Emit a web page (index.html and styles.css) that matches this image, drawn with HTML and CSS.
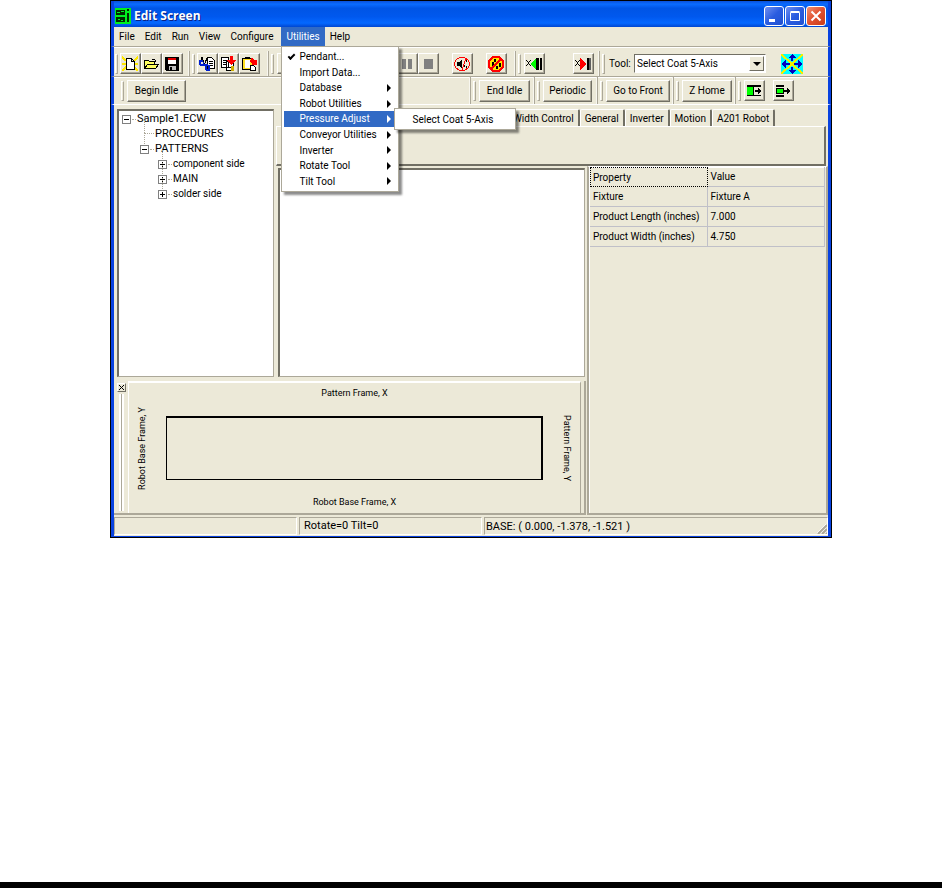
FILE: index.html
```html
<!DOCTYPE html>
<html lang="en">
<head>
    <meta charset="UTF-8">
    <meta name="viewport" content="width=device-width, initial-scale=1.0">
    <title>Edit Screen</title>
    <link rel="stylesheet" href="styles.css">
</head>
<body>
    <div class="window">
        <header class="titlebar">
            <svg class="appIcon" width="16" height="16" viewBox="0 0 16 16" shape-rendering="crispEdges">
                <path fill="#00f020" d="M0 0h16v16H0z"/>
                <path fill="#002800" d="M1 2h9v5H1zM1 9h9v5H1zM12 5h2v9h-2zM12 1h2v2h-2z"/>
                <path fill="#00f020" d="M2 4h3v1H2zM6 3h3v1H6zM3 11h2v1H3zM6 12h2v1H6z"/>
            </svg>
            <h1>Edit Screen</h1>
            <button class="winBtn" aria-label="Minimize"><svg width="18" height="18" viewBox="0 0 18 18"><path fill="#fff" d="M4 12h6v3H4z"/></svg></button>
            <button class="winBtn" aria-label="Maximize"><svg width="18" height="18" viewBox="0 0 18 18"><path fill="none" stroke="#fff" d="M4.500 5.500h9v8h-9zM4.500 4.500h9"/></svg></button>
            <button class="winBtn close" aria-label="Close"><svg width="18" height="18" viewBox="0 0 18 18"><path stroke="#fff" stroke-width="2" d="M4.500 4.500l9 9M13.500 4.500l-9 9"/></svg></button>
        </header>

        <nav class="menubar">
            <button>File</button>
            <button>Edit</button>
            <button>Run</button>
            <button>View</button>
            <button>Configure</button>
            <div class="menuItem">
                <button class="open">Utilities</button>
                <ul class="dropdown">
                    <li class="checked"><button>Pendant...</button></li>
                    <li><button>Import Data...</button></li>
                    <li class="more"><button>Database</button></li>
                    <li class="more"><button>Robot Utilities</button></li>
                    <li class="more active"><button>Pressure Adjust</button>
                        <ul class="dropdown submenu">
                            <li><button>Select Coat 5-Axis</button></li>
                        </ul>
                    </li>
                    <li class="more"><button>Conveyor Utilities</button></li>
                    <li class="more"><button>Inverter</button></li>
                    <li class="more"><button>Rotate Tool</button></li>
                    <li class="more"><button>Tilt Tool</button></li>
                </ul>
            </div>
            <button>Help</button>
        </nav>

        <div class="toolbar first">
            <div class="band bandFile">
                <button class="tool" aria-label="New"><svg width="16" height="16" viewBox="0 0 16 16" shape-rendering="crispEdges"><path stroke="#ffe800" stroke-width="2" d="M0 1l4 4M16 1l-4 4M0 15l4-4M16 15l-4-4M0 8h16"/><path fill="#fff" stroke="#000" d="M4.500 2.500h5l3 3v8h-8zM9.500 2.500v3h3"/></svg></button>
                <button class="tool" aria-label="Open"><svg width="16" height="16" viewBox="0 0 16 16" shape-rendering="crispEdges"><path fill="#ffff60" stroke="#000" d="M1.500 12.500v-8h4l1 1h5v3M1.500 12.500l3-4h11l-3 4z"/><path fill="none" stroke="#000" d="M9 3.500h3M12.500 3.500v2"/></svg></button>
                <button class="tool" aria-label="Save"><svg width="16" height="16" viewBox="0 0 16 16" shape-rendering="crispEdges"><path d="M1 1h14v14H2l-1-1z"/><path fill="#fff" d="M4 3h8v5H4z"/><path fill="#e00000" d="M4 2h8v2H4z"/><path fill="#c0c0c0" d="M5 10h7v4H5z"/><path d="M6 11h2v3H6z"/></svg></button>
            </div>
            <div class="band bandEdit">
                <button class="tool" aria-label="Cut"><svg width="16" height="16" viewBox="0 0 16 16" shape-rendering="crispEdges"><path fill="#fff" stroke="#000" d="M8.500 1.500h4l3 3v8h-7z"/><path stroke="#000" d="M10 5.500h4M10 7.500h4M10 9.500h4"/><path d="M2 1h2v3h1v3h1v2H4V6H3V4H2zM7 2h1v3H7v2H6V4h1z"/><path fill="#0020d0" d="M0 4h4v2H0zM0 6h2v3H0zM1 8h8v2H1zM4 6h1v3H4zM6 9h2v5H6zM7 13h4v2H7zM9 9h2v5H9z"/></svg></button>
                <button class="tool" aria-label="Copy"><svg width="16" height="16" viewBox="0 0 16 16" shape-rendering="crispEdges"><path fill="#fff" stroke="#000" d="M1.500 1.500h7v10h-7zM6.500 5.500h7v9h-7z"/><path stroke="#000" d="M3 4.500h4M3 6.500h3M3 8.500h3M8 11.500h3"/><path fill="#f00" d="M10 0h3v4h3l-5 5-4-5h3z"/><path fill="#d0b000" d="M11 10h3v5h-3z"/></svg></button>
                <button class="tool" aria-label="Paste"><svg width="16" height="16" viewBox="0 0 16 16" shape-rendering="crispEdges"><path fill="#ffe020" stroke="#000" d="M1.500 2.500h10v11h-10z"/><path fill="#fff" d="M4 4h5v8H4z"/><path d="M4 1h5v2H4z"/><path fill="#fff" stroke="#000" d="M9.500 9.500h3l2 2v3h-5z"/><path fill="#f00" d="M11 1l2 3 3 0v5h-6l1-1-2-3z"/></svg></button>
            </div>
            <div class="band bandRun">
                <button class="tool" aria-label="Run"><svg width="16" height="16" viewBox="0 0 16 16"><path fill="#c00" d="M2 3h4l8 5-8 5z"/></svg></button>
                <div class="runGroup">
                    <button class="tool" aria-label="Pause"><svg width="16" height="16" viewBox="0 0 16 16" shape-rendering="crispEdges"><path fill="#808080" d="M3 3h4v10H3zM9 3h4v10H9z"/></svg></button>
                    <button class="tool" aria-label="Stop"><svg width="16" height="16" viewBox="0 0 16 16" shape-rendering="crispEdges"><path fill="#808080" d="M4 3h9v10H4z"/></svg></button>
                </div>
                <button class="tool" aria-label="Mute"><svg width="16" height="16" viewBox="0 0 16 16" shape-rendering="crispEdges"><path d="M3 6h2l3-3v10l-3-3H3z"/><path fill="none" stroke="#000" d="M10.500 5v2M10.500 9v2M12.500 4v2M12.500 10v2"/><ellipse cx="8" cy="8" rx="7.500" ry="6.500" fill="none" stroke="#f00"/><path stroke="#f00" d="M12 2L8 14"/></svg></button>
                <button class="tool" aria-label="Clear alarm"><svg width="16" height="16" viewBox="0 0 16 16" shape-rendering="crispEdges"><path fill="#ffe800" d="M5 1h6l4 4v6l-4 4H5l-4-4V5z"/><path d="M6 3h2v3H6zM4 6h2v4H4zM11 7h2v4h-2zM8 10h2v3H8z"/><path fill="none" stroke="#f00" stroke-width="2" d="M5 1h6l4 4v6l-4 4H5l-4-4V5zM13 3L3 13"/></svg></button>
            </div>
            <div class="band bandEnds">
                <button class="tool" aria-label="X minus limit"><svg width="16" height="16" viewBox="0 0 16 16" shape-rendering="crispEdges"><path d="M0 4h1v1h1v1h1V5h1V4h1v1H4v1H3v2h1v1h1v1H4V9H3V8H2v1H1v1H0V9h1V8h1V6H1V5H0z"/><path fill="#0f0" d="M5 8l5-6v12z"/><path d="M10 2h3v12h-3zM14 2h2v12h-2z"/></svg></button>
                <button class="tool" aria-label="X plus limit"><svg width="16" height="16" viewBox="0 0 16 16" shape-rendering="crispEdges"><path d="M0 4h1v1h1v1h1V5h1V4h1v1H4v1H3v2h1v1h1v1H4V9H3V8H2v1H1v1H0V9h1V8h1V6H1V5H0z"/><path fill="#f00" d="M11 8L5 2v12z"/><path d="M12 2h2v12h-2z"/><path fill="#606060" d="M14 2h2v12h-2z"/></svg></button>
            </div>
            <div class="band bandTool">
                <label for="toolSelect">Tool:</label>
                <div class="selectBox">
                    <select id="toolSelect"><option>Select Coat 5-Axis</option></select>
                    <span class="selectArrow"></span>
                </div>
                <svg class="jog" width="22" height="20" viewBox="0 0 22 20" shape-rendering="crispEdges"><path fill="#0ff" d="M0 0h22v20H0z"/><path fill="#0000c0" d="M11 0l4 4h-3v3h-2V4H7zM11 20l4-4h-3v-3h-2v3H7zM0 10l5-4v3h4v2H5v3zM22 10l-5-4v3h-4v2h4v3z"/><path stroke="#f0f000" stroke-width="2" d="M0 0l22 20M22 0L0 20"/></svg>
            </div>
        </div>

        <div class="toolbar second">
            <div class="band bandBegin"><button class="textBtn">Begin Idle</button></div>
            <div class="band bandEnd"><button class="textBtn">End Idle</button></div>
            <div class="band bandPeriodic"><button class="textBtn">Periodic</button></div>
            <div class="band bandFront"><button class="textBtn">Go to Front</button></div>
            <div class="band bandHome"><button class="textBtn">Z Home</button></div>
            <div class="band bandMove">
                <button class="tool" aria-label="Load board"><svg width="16" height="16" viewBox="0 0 16 16" shape-rendering="crispEdges"><path fill="#0f0" d="M1 4h6v8H1z"/><path d="M1 2h14v2H1zM1 12h14v1H1zM7 4h1v8H7zM9 7h3V5l3 3-3 3V9H9z"/></svg></button>
                <button class="tool" aria-label="Unload board"><svg width="16" height="16" viewBox="0 0 16 16" shape-rendering="crispEdges"><path d="M1 2h8v2H1zM1 12h8v2H1zM9 7h3V5l4 3-4 3V9H9z"/><path fill="#0f0" stroke="#000" d="M1.500 5.500h7v5h-7z"/></svg></button>
            </div>
        </div>

        <main class="workspace">
            <section class="tree">
                <ul>
                    <li><button class="toggle minus" aria-label="Collapse"></button><span>Sample1.ECW</span>
                        <ul>
                            <li><i class="leaf"></i><span>PROCEDURES</span></li>
                            <li><button class="toggle minus" aria-label="Collapse"></button><span>PATTERNS</span>
                                <ul class="patterns">
                                    <li><button class="toggle" aria-label="Expand"></button><span>component side</span></li>
                                    <li><button class="toggle" aria-label="Expand"></button><span>MAIN</span></li>
                                    <li><button class="toggle" aria-label="Expand"></button><span>solder side</span></li>
                                </ul>
                            </li>
                        </ul>
                    </li>
                </ul>
            </section>

            <section class="tabs">
                <div class="tabRow">
                    <button>Width Control</button>
                    <button>General</button>
                    <button>Inverter</button>
                    <button>Motion</button>
                    <button>A201 Robot</button>
                </div>
                <div class="tabPanel"></div>
            </section>

            <section class="document"></section>

            <section class="properties">
                <table>
                    <tr><th class="focus">Property</th><th>Value</th></tr>
                    <tr><td>Fixture</td><td>Fixture A</td></tr>
                    <tr><td>Product Length (inches)</td><td>7.000</td></tr>
                    <tr><td>Product Width (inches)</td><td>4.750</td></tr>
                </table>
            </section>

            <section class="frame">
                <div class="frameGrip">
                    <button class="frameClose" aria-label="Close frame view"><svg width="5" height="5" viewBox="0 0 5 5"><path stroke="#000" d="M0 0l5 5M5 0L0 5"/></svg></button>
                    <div class="rails"></div>
                </div>
                <div class="frameView">
                    <span class="axisTop">Pattern Frame, X</span>
                    <span class="axisLeft">Robot Base Frame, Y</span>
                    <div class="board"></div>
                    <span class="axisRight">Pattern Frame, Y</span>
                    <span class="axisBottom">Robot Base Frame, X</span>
                </div>
            </section>
        </main>

        <footer class="statusbar">
            <span></span>
            <span>Rotate=0 Tilt=0</span>
            <span class="base">BASE: ( 0.000, -1.378, -1.521 )
                <svg width="10" height="10" viewBox="0 0 10 10"><path stroke="#fff" d="M0 9l9-9M4 9l5-5M8 9l1-1"/><path stroke="#aca899" stroke-width="2" d="M1 10l9-9M5 10l5-5M9 10l1-1"/></svg>
            </span>
        </footer>
    </div>
    <div class="pageRule"></div>
</body>
</html>
```
FILE: styles.css
```css
html,body{
    margin: 0;
    padding: 0;
    background: #ffffff;
}
body{
    display: flex;
    flex-direction: column;
    min-height: 100vh;
    color: #000000;
    font: 10px/15px Roboto,"Liberation Sans",Arial,sans-serif;
}
button,select{
    margin: 0;
    padding: 0;
    border: 0;
    border-radius: 0;
    background: none;
    color: inherit;
    font: inherit;
    white-space: nowrap;
}
ul{
    margin: 0;
    padding: 0;
    list-style: none;
}
svg{
    display: block;
}
.window{
    box-sizing: border-box;
    margin: 0 110px;
    border: 1px solid #000000;
    background: #ece9d8;
}
.window > *{
    border: 0 solid #0842e0;
    border-width: 0 3px;
}

/* title bar */
.titlebar{
    display: flex;
    align-items: center;
    gap: 1px;
    height: 26px;
    padding: 3px 2px 0 1px;
    box-sizing: border-box;
    color: #ffffff;
    background: linear-gradient(#0a50d8, #0a6cff 12%, #0055e5 28%, #0058ee 60%, #0468ff 85%, #0046d0);
}
.titlebar h1{
    flex: 1;
    margin: 0 0 0 2px;
    font: bold 12px/16px "Open Sans","Noto Sans",sans-serif;
    text-shadow: 1px 1px #0a2080;
}
.winBtn{
    box-sizing: border-box;
    width: 20px;
    height: 20px;
    border: 1px solid #ffffff;
    border-radius: 3px;
    background: linear-gradient(135deg, #7090f0, #2a5ce0 50%, #2050d0);
}
.winBtn.close{
    background: linear-gradient(135deg, #f09070, #e05030 50%, #c83c18);
}

/* menu */
.menubar{
    display: flex;
    height: 19px;
}
.menubar > button,.menuItem > button{
    height: 19px;
    padding: 0 5px;
}
.menuItem{
    position: relative;
    margin-left: 3px;
}
.menuItem > .open{
    color: #ffffff;
    background: #316ac5;
}
.dropdown{
    position: absolute;
    top: 19px;
    left: 0;
    z-index: 2;
    display: grid;
    grid-auto-rows: 1fr;
    box-sizing: border-box;
    width: 118px;
    height: 146px;
    padding: 2px;
    border: 1px solid #aca899;
    background: #ffffff;
    box-shadow: 3px 3px 2px rgba(0, 0, 0, 0.45);
}
.dropdown li{
    position: relative;
}
.dropdown li > button{
    display: block;
    width: 100%;
    height: 100%;
    padding-left: 15px;
    text-align: left;
}
.dropdown .active > button{
    color: #ffffff;
    background: #316ac5;
}
.more::after{
    content: "";
    position: absolute;
    top: 4px;
    right: 5px;
    border: 4px solid transparent;
    border-left-color: #000000;
    border-right: 0;
}
.more.active::after{
    border-left-color: #ffffff;
}
.checked::before{
    content: "";
    position: absolute;
    top: 5px;
    left: 4px;
    width: 5px;
    height: 2px;
    border: solid #000000;
    border-width: 0 0 2px 2px;
    transform: rotate(-45deg);
}
.dropdown .submenu{
    top: -3px;
    left: 110px;
    width: 122px;
    height: 22px;
}

/* toolbars */
.toolbar{
    display: flex;
    height: 30px;
    border-top: 1px solid #aca899;
    box-sizing: border-box;
    box-shadow: inset 0 1px #ffffff;
}
.toolbar.first{
    padding-top: 4px;
}
.toolbar.second{
    height: 29px;
    border-bottom: 1px solid #ffffff;
}
.band{
    display: flex;
    align-items: center;
    gap: 1px;
    box-sizing: border-box;
    padding-left: 2px;
    border-right: 1px solid #aca899;
    box-shadow: inset -1px 0 #f8f7f0;
}
.band:last-child{
    flex: 1;
    border-right: 0;
    box-shadow: none;
}
/* drag handle */
.band::before{
    content: "";
    box-sizing: border-box;
    width: 3px;
    height: 20px;
    margin-right: 2px;
    border: 1px solid #ffffff;
    border-right-color: #aca899;
    border-bottom-color: #aca899;
}
.tool,.textBtn{
    box-sizing: border-box;
    height: 21px;
    border: 1px solid #ffffff;
    border-right-color: #716f64;
    border-bottom-color: #716f64;
    background: #ece9d8;
    box-shadow: inset -1px -1px #aca899;
}
.tool{
    flex: none;
    width: 21px;
    padding: 1px;
}
.bandFile{
    width: 76px;
    gap: 0;
    padding-left: 1px;
}
.bandEdit{
    width: 79px;
    gap: 0;
}
.bandRun{
    width: 247px;
    gap: 13px;
    padding-right: 8px;
}
.bandRun::before{
    margin-right: -10px;
}
.runGroup{
    display: flex;
    margin-left: auto;
}
.bandEnds{
    width: 84px;
    padding-right: 5px;
}
.bandEnds .tool:last-child{
    margin-left: auto;
}
.bandTool label{
    width: 24px;
    margin-left: 1px;
}
.selectBox{
    position: relative;
    width: 132px;
}
.selectBox select{
    display: block;
    box-sizing: border-box;
    width: 100%;
    height: 19px;
    padding-left: 2px;
    border: 1px solid #716f64;
    border-right-color: #ffffff;
    border-bottom-color: #ffffff;
    background: #ffffff;
    appearance: none;
}
.selectArrow{
    position: absolute;
    top: 2px;
    right: 2px;
    box-sizing: border-box;
    width: 15px;
    height: 15px;
    border: 1px solid #ffffff;
    border-right-color: #716f64;
    border-bottom-color: #716f64;
    background: #ece9d8;
    pointer-events: none;
}
.selectArrow::after{
    content: "";
    position: absolute;
    top: 5px;
    left: 3px;
    border: 4px solid transparent;
    border-top-color: #000000;
    border-bottom: 0;
}
.jog{
    margin-left: 14px;
}
.textBtn{
    height: 22px;
}
.bandBegin{
    width: 357px;
    padding-left: 7px;
}
.bandBegin .textBtn{
    width: 59px;
}
.bandEnd{
    width: 64px;
}
.bandEnd .textBtn{
    width: 51px;
}
.bandPeriodic{
    width: 63px;
}
.bandPeriodic .textBtn{
    width: 49px;
}
.bandFront{
    width: 76px;
}
.bandFront .textBtn{
    width: 64px;
}
.bandHome{
    width: 62px;
}
.bandHome .textBtn{
    width: 50px;
}
.bandMove{
    gap: 8px;
}
.bandMove::before{
    margin-right: -5px;
}

/* workspace */
.workspace{
    display: grid;
    grid-template-columns: 160px minmax(0, 312fr) minmax(0, 242fr);
    grid-template-rows: 61px 213px 136px;
    grid-template-areas:
        "tree tabs tabs"
        "tree document properties"
        "frame frame properties";
}
.tree{
    grid-area: tree;
    margin: 4px 0 2px 3px;
    padding: 0 3px;
    border: 2px solid #716f64;
    border-width: 2px 1px 1px 2px;
    border-right-color: #aca899;
    border-bottom-color: #aca899;
    background: #ffffff;
    font-size: 11px;
}
.tree .patterns{
    font-size: 10px;
}
.tree li{
    position: relative;
}
.tree li li::before{
    content: "";
    position: absolute;
    top: -8px;
    left: 4px;
    height: 15px;
    border-left: 1px dotted #aca899;
}
.tree li ul{
    margin-left: 18px;
}
.tree span{
    margin-left: 6px;
}
.toggle,.leaf{
    position: relative;
    display: inline-block;
    width: 9px;
    height: 9px;
    box-sizing: border-box;
    vertical-align: -1px;
}
.toggle{
    border: 1px solid #808080;
    background: linear-gradient(#000000, #000000) center/5px 1px no-repeat, linear-gradient(#000000, #000000) center/1px 5px no-repeat, #ffffff;
}
.toggle.minus{
    background: linear-gradient(#000000, #000000) center/5px 1px no-repeat, #ffffff;
}
.toggle::after,.leaf::after{
    content: "";
    position: absolute;
    top: 3px;
    left: 9px;
    width: 4px;
    border-top: 1px dotted #aca899;
}
.leaf::after{
    top: 4px;
    left: 5px;
    width: 9px;
}
.tabs{
    grid-area: tabs;
    display: flex;
    flex-direction: column;
    padding: 4px 2px 0;
}
.tabRow{
    display: flex;
    padding-left: 232px;
}
.tabRow button{
    height: 17px;
    padding: 0 4px;
    border: 1px solid #ffffff;
    border-right: 2px solid #716f64;
    border-bottom: 0;
    border-radius: 2px 2px 0 0;
}
.tabPanel{
    flex: 1;
    border: 1px solid #ffffff;
    border-right: 2px solid #716f64;
    border-bottom: 2px solid #716f64;
}
.document{
    grid-area: document;
    margin: 2px 1px 2px 4px;
    border: 2px solid #716f64;
    border-right: 1px solid #aca899;
    border-bottom: 1px solid #aca899;
    background: #ffffff;
}
.properties{
    grid-area: properties;
    margin-left: 1px;
    border: 2px solid #aca899;
    border-top: 1px solid #ffffff;
    padding: 0 1px;
    box-shadow: inset 1px 1px #ffffff;
}
.properties table{
    width: 100%;
    border-spacing: 0;
    table-layout: fixed;
}
.properties th,.properties td{
    height: 19px;
    padding: 0 3px;
    border: 0 solid #c0c0c8;
    border-width: 0 1px 1px 0;
    font-weight: normal;
    text-align: left;
    white-space: nowrap;
}
.properties .focus{
    border: 1px dotted #000000;
    height: 18px;
    padding: 0 2px;
}
.frame{
    grid-area: frame;
    display: flex;
    margin-top: 2px;
    border-right: 2px solid #aca899;
    border-bottom: 2px solid #aca899;
}
.frameGrip{
    display: flex;
    flex-direction: column;
    align-items: center;
    gap: 2px;
    width: 14px;
    padding: 2px 0 2px 1px;
    box-sizing: border-box;
}
.frameClose{
    display: grid;
    place-items: center;
    box-sizing: border-box;
    width: 9px;
    height: 9px;
    border: 1px solid #ffffff;
    border-right-color: #716f64;
    border-bottom-color: #716f64;
}
.rails{
    flex: 1;
    width: 1px;
    border: 2px solid #ffffff;
    border-width: 0 2px;
    background: #aca899;
}
.frameView{
    flex: 1;
    display: grid;
    grid-template-columns: 37px minmax(0, 1fr) 37px;
    grid-template-rows: 33px 64px 1fr;
    place-items: center;
    margin-right: 3px;
    border: 1px solid #aca899;
    border-top: 2px solid #ffffff;
    border-left: 1px solid #ffffff;
    border-bottom: 0;
    font-size: 9px;
    line-height: 11px;
    white-space: nowrap;
}
.axisTop{
    grid-area: 1 / 2;
    align-self: start;
    padding-top: 5px;
}
.axisLeft{
    grid-area: 1 / 1 / 4;
    justify-self: start;
    margin-left: 8px;
    writing-mode: vertical-rl;
    transform: rotate(180deg);
}
.board{
    grid-area: 2 / 2;
    box-sizing: border-box;
    width: 100%;
    height: 100%;
    border: 2px solid #000000;
    border-width: 2px 2px 1px 1px;
}
.axisRight{
    grid-area: 1 / 3 / 4;
    justify-self: end;
    margin-right: 8px;
    writing-mode: vertical-rl;
}
.axisBottom{
    grid-area: 3 / 2;
    align-self: end;
    padding-bottom: 5px;
}

/* status bar */
.statusbar{
    display: flex;
    gap: 2px;
    padding: 2px 0 1px;
    border-bottom-width: 1px;
    font-size: 11px;
}
.statusbar span{
    width: 183px;
    height: 18px;
    box-sizing: border-box;
    padding-left: 4px;
    border: 1px solid #aca899;
    border-right-color: #ffffff;
    border-bottom-color: #ffffff;
}
.statusbar .base{
    flex: 1;
    display: flex;
    justify-content: space-between;
    align-items: end;
    padding-left: 1px;
}
.pageRule{
    height: 6px;
    margin-top: auto;
    background: #000000;
}
```
